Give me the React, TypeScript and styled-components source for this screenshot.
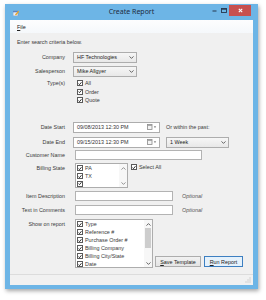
import React from "react";
import styled, { createGlobalStyle } from "styled-components";

const GlobalStyle = createGlobalStyle`
  html, body {
    margin: 0;
    padding: 0;
    background: #ffffff;
  }
  body {
    font-family: "Liberation Sans", Arial, sans-serif;
  }
`;

const Page = styled.div`
  width: 266px;
  height: 300px;
  padding: 4px 0 0 5px;
  box-sizing: border-box;
`;

const Window = styled.div`
  width: 253px;
  height: 285px;
  box-sizing: border-box;
  padding: 0 5px 4px 5px;
  background: #6db5e6;
  display: flex;
  flex-direction: column;
  box-shadow: 1px 2px 4px rgba(0, 0, 0, 0.35);
`;

const TitleBar = styled.div`
  height: 16px;
  display: flex;
  align-items: flex-start;
  position: relative;
  flex-shrink: 0;
`;

const AppIcon = styled.div`
  margin: 6px 0 0 3px;
  width: 6px;
  height: 6px;
  display: flex;
`;

const Title = styled.div`
  position: absolute;
  left: 0;
  right: 0;
  top: 3px;
  text-align: center;
  font-family: "Noto Sans", "Open Sans", sans-serif;
  font-size: 7px;
  line-height: 10px;
  color: #1d2b3d;
`;

const Controls = styled.div`
  margin-left: auto;
  margin-right: 2px;
  display: flex;
  align-items: flex-start;
`;

const CtrlButton = styled.div<{ $close?: boolean }>`
  width: ${(p) => (p.$close ? 22 : 10)}px;
  height: 11px;
  margin-top: 1px;
  background: ${(p) => (p.$close ? "#c7504f" : "transparent")};
  display: flex;
  align-items: center;
  justify-content: center;
`;

const MenuBar = styled.div`
  height: 13px;
  background: linear-gradient(#fdfdfe, #f5f8fb);
  display: flex;
  align-items: center;
  padding-left: 7px;
  font-size: 5.4px;
  color: #222;
  flex-shrink: 0;
`;

const Body = styled.div`
  flex: 1;
  background: #f0f0f0;
  display: flex;
  flex-direction: column;
  font-size: 5.4px;
  line-height: 8px;
  color: #3a3a3a;
`;

const Intro = styled.div`
  margin: 5px 0 0 7px;
  height: 8px;
`;

const Row = styled.div<{ $mt: number; $h?: number }>`
  display: flex;
  align-items: center;
  margin-top: ${(p) => p.$mt}px;
  height: ${(p) => p.$h ?? 11}px;
  flex-shrink: 0;
`;

const Label = styled.div<{ $top?: number }>`
  width: 55px;
  margin-right: 8px;
  text-align: right;
  flex-shrink: 0;
  align-self: ${(p) => (p.$top !== undefined ? "flex-start" : "center")};
  margin-top: ${(p) => p.$top ?? 0}px;
`;

const Combo = styled.div<{ $w: number; $ml?: number }>`
  width: ${(p) => p.$w}px;
  margin-left: ${(p) => p.$ml ?? 0}px;
  height: 11px;
  box-sizing: border-box;
  border: 1px solid #adadad;
  background: linear-gradient(#f6f6f6, #e8e8e8);
  display: flex;
  align-items: center;
  padding: 0 2px 0 3px;
  color: #222;
`;

const Arrow = styled.span`
  margin-left: auto;
  display: flex;
`;

const TextBox = styled.div<{ $w: number }>`
  width: ${(p) => p.$w}px;
  margin-left: 2px;
  height: 10px;
  box-sizing: border-box;
  border: 1px solid #b3b3b3;
  background: #ffffff;
`;

const DateField = styled.div`
  width: 87px;
  height: 11px;
  box-sizing: border-box;
  border: 1px solid #adadad;
  background: #ffffff;
  display: flex;
  align-items: center;
  padding: 0 2px 0 3px;
  color: #333;
`;

const Side = styled.div<{ $ml: number }>`
  margin-left: ${(p) => p.$ml}px;
  color: #3a3a3a;
`;

const Optional = styled.div`
  margin-left: 9px;
  font-style: italic;
  color: #555;
`;

const CheckList = styled.div`
  display: flex;
  flex-direction: column;
  align-self: flex-start;
  margin-left: 4px;
`;

const CheckRow = styled.div<{ $h?: number }>`
  height: ${(p) => p.$h ?? 8.5}px;
  display: flex;
  align-items: center;
  gap: 2px;
  white-space: nowrap;
`;

const Box = styled.span`
  width: 6px;
  height: 6px;
  box-sizing: border-box;
  border: 1px solid #5a5a5a;
  background: #ffffff;
  display: flex;
  align-items: center;
  justify-content: center;
  flex-shrink: 0;
`;

const ListBox = styled.div<{ $w: number; $h: number }>`
  width: ${(p) => p.$w}px;
  height: ${(p) => p.$h}px;
  margin-left: 2px;
  box-sizing: border-box;
  border: 1px solid #adadad;
  background: #ffffff;
  display: flex;
  align-self: flex-start;
  overflow: hidden;
`;

const ListItems = styled.div`
  flex: 1;
  padding-left: 1px;
  display: flex;
  flex-direction: column;
`;

const ScrollBar = styled.div`
  width: 8px;
  display: flex;
  flex-direction: column;
  align-items: center;
  background: #f7f7f7;
`;

const ScrollArrow = styled.div`
  height: 8px;
  display: flex;
  align-items: center;
  justify-content: center;
`;

const Track = styled.div`
  flex: 1;
  width: 100%;
  display: flex;
  justify-content: center;
`;

const Thumb = styled.div`
  width: 6px;
  height: 20px;
  background: #cdcdcd;
`;

const SelectAll = styled.div`
  align-self: flex-start;
  margin: 0 0 0 3px;
`;

const Buttons = styled.div`
  align-self: flex-end;
  display: flex;
  gap: 3px;
  margin: 0 0 1px 2px;
`;

const Button = styled.div<{ $primary?: boolean; $w: number }>`
  width: ${(p) => p.$w}px;
  height: 11px;
  box-sizing: border-box;
  border: 1px solid ${(p) => (p.$primary ? "#3d7fc1" : "#adadad")};
  background: ${(p) => (p.$primary ? "#e5f1fb" : "linear-gradient(#f2f2f2, #e4e4e4)")};
  display: flex;
  align-items: center;
  justify-content: center;
  color: #222;
`;

const StatusBar = styled.div`
  height: 11px;
  flex-shrink: 0;
  background: #f1f1f1;
  border-top: 1px solid #dcdcdc;
  box-sizing: border-box;
  display: flex;
  justify-content: flex-end;
  align-items: flex-end;
  padding: 0 2px 2px 0;
`;

const Chevron = ({ up, color = "#555" }: { up?: boolean; color?: string }) => (
  <svg width="5" height="3" viewBox="0 0 5 3">
    <path
      d={up ? "M0.5 2.6 L2.5 0.6 L4.5 2.6" : "M0.5 0.4 L2.5 2.4 L4.5 0.4"}
      stroke={color}
      strokeWidth="0.9"
      fill="none"
    />
  </svg>
);

const Check = () => (
  <Box>
    <svg width="5" height="5" viewBox="0 0 5 5">
      <path d="M0.7 2.6 L1.9 3.9 L4.3 0.9" stroke="#111" strokeWidth="1.1" fill="none" />
    </svg>
  </Box>
);

const CheckItem = ({ label, h }: { label?: string; h?: number }) => (
  <CheckRow $h={h}>
    <Check />
    <span>{label}</span>
  </CheckRow>
);

const DatePicker = ({ value }: { value: string }) => (
  <DateField>
    <span>{value}</span>
    <Arrow>
      <svg width="10" height="6" viewBox="0 0 10 6">
        <rect x="0.5" y="0.5" width="4.5" height="5" fill="#f4f4f4" stroke="#8a8a8a" strokeWidth="0.8" />
        <rect x="0.5" y="0.5" width="4.5" height="1.3" fill="#9a9a9a" />
        <path d="M6.8 2.4 L9.2 2.4 L8 3.8 Z" fill="#444" />
      </svg>
    </Arrow>
  </DateField>
);

const reportFields = ["Type", "Reference #", "Purchase Order #", "Billing Company", "Billing City/State", "Date"];

export default function App() {
  return (
    <>
      <GlobalStyle />
      <Page>
        <Window>
          <TitleBar>
            <AppIcon>
              <svg width="6" height="6" viewBox="0 0 6 6">
                <rect x="0" y="1" width="5" height="5" fill="#e8eef6" stroke="#7891b3" strokeWidth="0.6" />
                <rect x="0" y="1" width="5" height="1.3" fill="#5b82c4" />
                <path d="M2.5 5 L5.8 1.2" stroke="#e7a52c" strokeWidth="1.4" />
              </svg>
            </AppIcon>
            <Title>Create Report</Title>
            <Controls>
              <CtrlButton>
                <svg width="5" height="2" viewBox="0 0 5 2">
                  <rect x="0.5" y="0.5" width="4" height="1" fill="#27384f" />
                </svg>
              </CtrlButton>
              <CtrlButton>
                <svg width="6" height="5" viewBox="0 0 6 5">
                  <rect x="0.5" y="0.5" width="5" height="4" fill="none" stroke="#27384f" strokeWidth="0.9" />
                  <rect x="0.5" y="0.5" width="5" height="1.2" fill="#27384f" />
                </svg>
              </CtrlButton>
              <CtrlButton $close>
                <svg width="5" height="5" viewBox="0 0 5 5">
                  <path d="M0.8 0.8 L4.2 4.2 M4.2 0.8 L0.8 4.2" stroke="#ffffff" strokeWidth="1.1" />
                </svg>
              </CtrlButton>
            </Controls>
          </TitleBar>
          <MenuBar>
            <span>
              <u>F</u>ile
            </span>
          </MenuBar>
          <Body>
            <Intro>Enter search criteria below.</Intro>

            <Row $mt={5.5}>
              <Label>Company</Label>
              <Combo $w={64}>
                HF Technologies
                <Arrow>
                  <Chevron />
                </Arrow>
              </Combo>
            </Row>

            <Row $mt={3}>
              <Label>Salesperson</Label>
              <Combo $w={64}>
                Mike Allgyer
                <Arrow>
                  <Chevron />
                </Arrow>
              </Combo>
            </Row>

            <Row $mt={2.25} $h={25.5}>
              <Label $top={0}>Type(s)</Label>
              <CheckList>
                <CheckItem label="All" />
                <CheckItem label="Order" />
                <CheckItem label="Quote" />
              </CheckList>
            </Row>

            <Row $mt={17.25}>
              <Label>Date Start</Label>
              <DatePicker value="09/08/2013 12:30 PM" />
              <Side $ml={6}>Or within the past:</Side>
            </Row>

            <Row $mt={4}>
              <Label>Date End</Label>
              <DatePicker value="09/15/2013 12:30 PM" />
              <Combo $w={63} $ml={6}>
                1 Week
                <Arrow>
                  <Chevron />
                </Arrow>
              </Combo>
            </Row>

            <Row $mt={2}>
              <Label>Customer Name</Label>
              <TextBox $w={127} />
            </Row>

            <Row $mt={2.5} $h={25}>
              <Label $top={1}>Billing State</Label>
              <ListBox $w={53} $h={25}>
                <ListItems>
                  <CheckItem label="PA" h={8} />
                  <CheckItem label="TX" h={8} />
                  <CheckItem h={8} />
                </ListItems>
                <ScrollBar>
                  <ScrollArrow>
                    <Chevron up color="#888" />
                  </ScrollArrow>
                  <Track />
                  <ScrollArrow>
                    <Chevron color="#888" />
                  </ScrollArrow>
                </ScrollBar>
              </ListBox>
              <SelectAll>
                <CheckItem label="Select All" h={8} />
              </SelectAll>
            </Row>

            <Row $mt={2.5}>
              <Label>Item Description</Label>
              <TextBox $w={98} />
              <Optional>Optional</Optional>
            </Row>

            <Row $mt={3}>
              <Label>Text in Comments</Label>
              <TextBox $w={98} />
              <Optional>Optional</Optional>
            </Row>

            <Row $mt={3.5} $h={49}>
              <Label $top={1}>Show on report</Label>
              <ListBox $w={78} $h={49}>
                <ListItems>
                  {reportFields.map((f) => (
                    <CheckItem key={f} label={f} h={8} />
                  ))}
                </ListItems>
                <ScrollBar>
                  <ScrollArrow>
                    <Chevron up />
                  </ScrollArrow>
                  <Track>
                    <Thumb />
                  </Track>
                  <ScrollArrow>
                    <Chevron />
                  </ScrollArrow>
                </ScrollBar>
              </ListBox>
              <Buttons>
                <Button $w={46}>
                  <span>
                    <u>S</u>ave Template
                  </span>
                </Button>
                <Button $w={39} $primary>
                  <span>
                    <u>R</u>un Report
                  </span>
                </Button>
              </Buttons>
            </Row>
          </Body>
          <StatusBar>
            <svg width="6" height="6" viewBox="0 0 6 6">
              <g fill="#b8b8b8">
                <rect x="4.5" y="0.5" width="1" height="1" />
                <rect x="2.5" y="2.5" width="1" height="1" />
                <rect x="4.5" y="2.5" width="1" height="1" />
                <rect x="0.5" y="4.5" width="1" height="1" />
                <rect x="2.5" y="4.5" width="1" height="1" />
                <rect x="4.5" y="4.5" width="1" height="1" />
              </g>
            </svg>
          </StatusBar>
        </Window>
      </Page>
    </>
  );
}
